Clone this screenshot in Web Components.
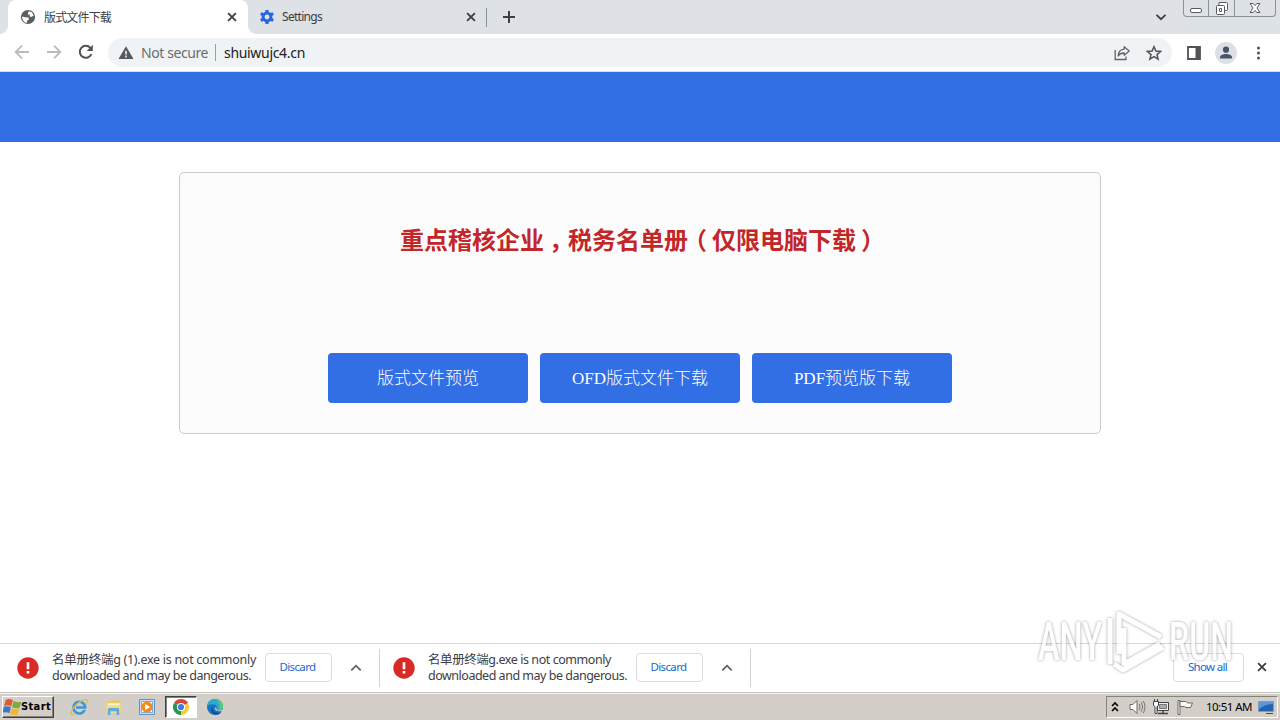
<!DOCTYPE html>
<html lang="zh-CN">
<head>
<meta charset="utf-8">
<title>版式文件下载</title>
<style>
  html, body {
    margin: 0;
    height: 100%;
    overflow: hidden;
  }

  body {
    background: #fff;
    font-family: "Noto Sans", "Noto Sans CJK SC", sans-serif;
  }
</style>
</head>
<body>
<desktop-screen></desktop-screen>

<script>
// @ts-check

/**
 * Registers an element whose shadow root is cloned from a parsed template
 * @param {string} name
 * @param {string} style
 * @param {string} markup
 */
function define(name, style, markup) {
  const tmpl = document.createElement("template");
  tmpl.innerHTML = `<style>* { box-sizing: border-box; } ${style}</style>${markup}`;

  customElements.define(name, class extends HTMLElement {
    constructor() {
      super();
      this.attachShadow({ mode: "open" }).appendChild(tmpl.content.cloneNode(true));
    }
  });
}

// every icon is [viewBox size, markup]
const icons = {
  globe: [16, `<circle cx="8" cy="8" r="7.1" fill="#5a5d61"/>
    <path d="M2.2 7.4 5 8.300 8.400 8.600 9 10.400 7.400 11.600 6.800 14C3.600 13.300 2 10.800 2.200 7.400ZM8.600 2.200 12 3.200 13.700 6.800 11 8 9.600 7.200 9.800 5.600 7.600 5.400Z" fill="#fff"/>`],
  gear: [16, `<circle cx="8" cy="8" r="3.900" fill="none" stroke="#2567dc" stroke-width="3"/>
    <g stroke="#2567dc" stroke-width="3.200"><path d="M8 .9v2.800M8 12.300v2.800M1.850 4.450l2.400 1.400M11.750 10.150l2.400 1.400M1.850 11.550l2.400-1.400M11.750 5.850l2.400-1.400"/></g>`],
  close: [16, `<path d="M3.500 3.500l9 9M12.500 3.500l-9 9" stroke="#3c4043" stroke-width="2.100"/>`],
  plus: [16, `<path d="M8 2v12M2 8h12" stroke="#3c4043" stroke-width="2"/>`],
  down: [16, `<path d="M3.500 5.800 8 10.200l4.500-4.400" fill="none" stroke="#3c4043" stroke-width="1.800"/>`],
  up: [16, `<path d="M3.300 10.400 8 5.700l4.700 4.700" fill="none" stroke="#5f6368" stroke-width="1.800"/>`],
  back: [16, `<path d="M15 8H2M8 1.700 1.700 8 8 14.300" fill="none" stroke="#b9bbbe" stroke-width="1.800"/>`],
  forward: [16, `<path d="M1 8h13M8 1.700 14.300 8 8 14.300" fill="none" stroke="#b9bbbe" stroke-width="1.800"/>`],
  reload: [16, `<path d="M13.400 10A6 6 0 1 1 12.400 3.900" fill="none" stroke="#505357" stroke-width="2"/>
    <path d="M14.800.8v6.100H8.700Z" fill="#505357"/>`],
  warning: [16, `<path d="M8 1.200 15.500 14H.5Z" fill="#55585c"/><path d="M8 5.800v3.600M8 10.600v1.800" stroke="#f1f3f4" stroke-width="1.600"/>`],
  share: [16, `<path d="M1.200 5v9.500H12V11.500" fill="none" stroke="#5f6368" stroke-width="1.300"/>
    <path d="M10.200 1.700 15.200 6 10.200 10.200V8C7.500 7.800 5.600 8.800 4.200 11 4.300 7 6.500 4.400 10.200 4.100Z" fill="none" stroke="#5f6368" stroke-width="1.300" stroke-linejoin="round"/>`],
  star: [16, `<path d="M8 1.700 9.900 6.100 14.600 6.500 11 9.600 12.100 14.200 8 11.700 3.900 14.200 5 9.600 1.400 6.500 6.100 6.100Z" fill="none" stroke="#505357" stroke-width="1.500"/>`],
  panel: [16, `<path d="M2 2h12v12H2Z" fill="none" stroke="#505357" stroke-width="1.800"/><path d="M9.500 2H14v12H9.500Z" fill="#505357"/>`],
  avatar: [22, `<circle cx="11" cy="11" r="11" fill="#dce0e5"/><circle cx="11" cy="7.700" r="3.100" fill="#46536b"/>
    <path d="M5 16.500v-1.200C5 12.800 8.500 12 11 12s6 .8 6 3.300v1.200Z" fill="#46536b"/>`],
  menu: [16, `<g fill="#505357"><circle cx="8.500" cy="2.900" r="1.500"/><circle cx="8.500" cy="8" r="1.500"/><circle cx="8.500" cy="13.100" r="1.500"/></g>`],
  alert: [22, `<circle cx="11" cy="11" r="10.700" fill="#d92b25"/><path d="M11 5.300v6.900M11 14v2.600" stroke="#fff" stroke-width="2.600"/>`],
  minimize: [16, `<rect x="2.500" y="8.500" width="11" height="4" rx="1.500" fill="#fff" stroke="#555a62"/>`],
  restore: [16, `<path d="M5 2.500h7.500q1 0 1 1v6q0 1-1 1h-2v3q0 1-1 1h-6q-1 0-1-1v-7q0-1 1-1H5Z" fill="#fff" stroke="#555a62"/>
    <path d="M5 5.500h4.500q1 0 1 1v4M5.500 8.500h2v3h-2Z" fill="none" stroke="#555a62"/>`],
  winClose: [16, `<path d="M3 3.500h3.200L8 5.600l1.800-2.100H13L9.900 8l3.100 4.500H9.800L8 10.400l-1.800 2.100H3L6.100 8Z" fill="#fff" stroke="#555a62"/>`],
  windows: [18, `<g transform="rotate(7 9 9)"><path d="M2 2.500Q6 .4 9.100 2.400L8.100 8.600Q5 7 1 8.900Z" fill="#e2592b"/>
    <path d="M10 2.900Q13.500 4.500 17.700 2.500L16.600 8.700Q12.500 10.500 9 8.900Z" fill="#7cac3d"/>
    <path d="M.9 9.800Q5 8 8 9.600L7 15.500Q4 14 0 15.900Z" fill="#3b79c4"/>
    <path d="M8.900 10Q12 11.600 16.500 9.700L15.500 15.700Q11 17.500 7.900 15.900Z" fill="#efb929"/></g>`],
  ie: [18, `<path d="M14.700 12A5.900 5.900 0 1 1 15.200 9.600H6" fill="none" stroke="#3898d9" stroke-width="2.500"/>
    <path d="M4.500 16C0 18.500.3 14 3.500 9.700 8 4 15.500-.4 17 2.300c.5 1-.1 2.300-.8 3.400" fill="none" stroke="#e3b84a" stroke-width="1.300"/>`],
  folder: [18, `<path d="M1.500 3h5l1-1.500h9v11h-15Z" fill="#e9c860"/><path d="M2.500 4.500h13v4h-13Z" fill="#fbf4cf"/>
    <path d="M1.500 6.500h15v8h-15Z" fill="#f4dc86"/><path d="M3 17v-6q0-1.500 1.500-1.500h9q1.500 0 1.500 1.500v6h-2.800v-4H5.800v4Z" fill="#63aadb"/>`],
  media: [18, `<path d="M1.500 1.500h15v15h-15Z" fill="#c9e0f4" stroke="#5d93c9"/><path d="M3.500 3.500h11v11h-11Z" fill="#f5f9fc" stroke="#7fabd6"/>
    <circle cx="9" cy="9" r="5.500" fill="#f28a1e"/><path d="M7.200 6v6l5-3Z" fill="#fff"/>`],
  chrome: [18, `<circle cx="9" cy="9" r="8" fill="#fff"/><path d="M9 9 2.070 5A8 8 0 0 1 15.930 5Z" fill="#dc4436"/>
    <path d="M9 9 15.930 5A8 8 0 0 1 9 17Z" fill="#f9cb38"/><path d="M9 9v8A8 8 0 0 1 2.070 5Z" fill="#25984b"/>
    <path d="M9 5h6.930a8 8 0 0 0-2-2.300Z" fill="#dc4436"/><circle cx="9" cy="9" r="4.100" fill="#fff"/><circle cx="9" cy="9" r="3.100" fill="#3f7de0"/>`],
  edge: [18, `<circle cx="9" cy="9" r="8" fill="#1b73c4"/>
    <path d="M1.100 8A8 8 0 0 1 9 1c4.500 0 8 3.500 8 7.600 0 2.600-2 3.900-4.300 3.900-1.500 0-2.500-.5-2.200-1.400.8-1.300.5-4.600-3.500-4.800-2.500 0-4.700.9-5.900 1.700Z" fill="#2aaccb"/>
    <path d="M10 1.100C14 1.500 17 4.900 17 8.600c0 2.600-2 3.900-4.300 3.900 2-3.700 1.300-8-2.700-11.400Z" fill="#5bc873"/>
    <path d="M7 8.600c-1.500 3.700 1.400 7.400 7.800 5.900C13 17 9 17.600 6.500 15.300 4.500 13 4.800 9.800 7 8.600Z" fill="#144f91"/>
    <path d="M9.500 9.300c-1.500 2.200.5 4.700 6.700 3.600l.8-1.400c-3 1.600-6.800 1.300-6.300-.5Z" fill="#d4cec8"/>`],
  chevrons: [16, `<path d="M5 7 8 4l3 3M5 12l3-3 3 3" fill="none" stroke="#000" stroke-width="1.600"/>`],
  speaker: [18, `<path d="M2 6.500h3L9 2.500v13l-4-4H2Z" fill="#fff" stroke="#6b6b6b"/>
    <path d="M11.200 6q1.800 3 0 6M13.200 4.200q3 4.800 0 9.600M15.300 3q3.400 6 0 12" fill="none" stroke="#777"/>`],
  network: [18, `<path d="M5.500 4.500h11v8h-11Z" fill="#eee" stroke="#444"/><path d="M7.500 6.500h7v4h-7Z" fill="#aaa" stroke="#777"/><path d="M6 15.500h10M11 12.500v3" stroke="#444" stroke-width="1.500"/>
    <path d="M1.500 3.500h5v4l-1.500 1v7H3v-7l-1.500-1ZM2.500 1v2.500M5.500 1v2.500" fill="#fff" stroke="#444"/>`],
  flag: [18, `<path d="M2 2.500h2v14H2Z" fill="#fff" stroke="#666"/><path d="M4 3.500h6l1.500 1.500h5l-2 4.500H10L8.500 8.500H4Z" fill="#fff" stroke="#666"/>`],
  desktop: [18, `<path d="M1.500 3.500h15v10h-15Z" fill="#2563b4" stroke="#7c9bbd"/><path d="M2 4h14v2Q8 6 2 11Z" fill="#5b97da"/><path d="M9 15.500h7" stroke="#394c66"/>`]
};

customElements.define("ui-icon", class extends HTMLElement {
  constructor() {
    super();
    this.attachShadow({ mode: "open" });
  }

  connectedCallback() {
    const [box, shape] = icons[this.getAttribute("name")];
    const size = this.getAttribute("size") || box;
    this.shadowRoot.innerHTML = `
      <style>
        :host { display: block; flex: none; width: ${size}px; height: ${size}px; }
        svg { display: block; }
      </style>
      <svg width="${size}" height="${size}" viewBox="0 0 ${box} ${box}">${shape}</svg>`;
  }
});

define("browser-tab", `
  :host {
    display: flex;
    align-items: center;
    width: 238px;
    height: 34px;
    padding: 0 8px 0 11px;
    font-size: 12px;
    color: #3c4043;
  }
  :host([active]) {
    position: relative;
    width: 240px;
    padding-right: 9px;
    padding-left: 12px;
    background: #fff;
    border-radius: 8px 8px 0 0;
  }
  /* the outward curves at the foot of the active tab */
  :host([active])::before,
  :host([active])::after {
    content: "";
    position: absolute;
    bottom: 0;
    width: 8px;
    height: 8px;
  }
  :host([active])::before { left: -8px; background: radial-gradient(circle at 0 0, transparent 7.5px, #fff 8px); }
  :host([active])::after { right: -8px; background: radial-gradient(circle at 100% 0, transparent 7.5px, #fff 8px); }
  .title { flex: 1; padding-left: 7px; line-height: 16px; }
  :host([active]) .title { padding: 1px 0 0 8px; }
`, `<slot name="icon"></slot><div class="title"><slot></slot></div><ui-icon name="close" size="14"></ui-icon>`);

define("window-buttons", `
  :host {
    display: flex;
    width: 93px;
    height: 17px;
    margin-right: 4px;
    border: 1px solid #8b919a;
    border-top: 0;
    border-radius: 0 0 4px 4px;
  }
  div { display: flex; justify-content: center; width: 24px; }
  div + div { width: 26px; border-left: 1px solid #8b919a; }
  div + .close { flex: 1; }
`, `<div><ui-icon name="minimize"></ui-icon></div><div><ui-icon name="restore"></ui-icon></div>
  <div class="close"><ui-icon name="winClose"></ui-icon></div>`);

define("tab-strip", `
  :host {
    display: flex;
    height: 34px;
    padding-left: 8px;
    background: #dee1e6;
  }
  .line { width: 1px; height: 19px; margin: 8px 14px 0 0; background: #8b8f96; }
  .plus { margin-top: 9px; }
  .down { margin: 9px 14px 0 auto; }
`, `
  <browser-tab active><ui-icon slot="icon" name="globe"></ui-icon><fit-label width="67">版式文件下载</fit-label></browser-tab>
  <browser-tab><ui-icon slot="icon" name="gear"></ui-icon><fit-label width="40">Settings</fit-label></browser-tab>
  <div class="line"></div>
  <ui-icon class="plus" name="plus"></ui-icon>
  <ui-icon class="down" name="down"></ui-icon>
  <window-buttons></window-buttons>
`);

define("address-bar", `
  :host {
    display: flex;
    align-items: center;
    height: 38px;
    padding: 0 14px;
    border-bottom: 1px solid #dcdfe3;
    background: #fff;
  }
  .nav { display: flex; gap: 16px; margin-top: -1px; }
  .box {
    flex: 1;
    display: flex;
    align-items: center;
    height: 29px;
    margin: 0 14px;
    padding: 0 10px;
    border-radius: 15px;
    background: #f0f3f5;
    font-size: 14px;
    line-height: 20px;
    color: #202124;
  }
  .secure { margin-left: 7px; color: #686c71; }
  .line { width: 1px; height: 17px; margin: 0 8px 0 7px; background: #9b9ea2; }
  .right { display: flex; gap: 16px; margin-left: auto; }
  .actions { display: flex; align-items: center; gap: 13px; }
`, `
  <div class="nav"><ui-icon name="back"></ui-icon><ui-icon name="forward"></ui-icon><ui-icon name="reload"></ui-icon></div>
  <div class="box">
    <ui-icon name="warning"></ui-icon>
    <fit-label class="secure" width="67">Not secure</fit-label>
    <div class="line"></div>
    <fit-label width="81">shuiwujc4.cn</fit-label>
    <div class="right"><ui-icon name="share"></ui-icon><ui-icon name="star"></ui-icon></div>
  </div>
  <div class="actions"><ui-icon name="panel"></ui-icon><ui-icon name="avatar"></ui-icon><ui-icon name="menu"></ui-icon></div>
`);

define("file-button", `
  :host {
    display: flex;
    align-items: center;
    justify-content: center;
    width: 200px;
    height: 50px;
    padding-top: 2px;
    border-radius: 4px;
    background: #326ee4;
    color: #fff;
    font: 300 17px/24px "Liberation Serif", "Noto Sans CJK SC", serif;
  }
`, `<slot></slot>`);

define("download-page", `
  :host { display: block; flex: 1; background: #fff; }
  header { height: 70px; background: #326ee4; }
  .card {
    display: flex;
    flex-direction: column;
    justify-content: space-between;
    width: 922px;
    height: 262px;
    margin: 30px auto 0;
    padding: 48px 0 30px;
    border: 1px solid #c9cbcd;
    border-radius: 5px;
    background: #fcfcfc;
  }
  h1 {
    margin: 0;
    font: 700 24px/36px "Noto Sans CJK SC", sans-serif;
    text-align: center;
    white-space: nowrap;
    color: #c22628;
  }
  /* half-width punctuation, set near the middle of a full-width cell */
  span { font-feature-settings: "halt" 1; padding: 0 7px 0 5px; }
  .open { padding: 0 5px 0 7px; }
  .row { display: flex; justify-content: center; gap: 12px; }
`, `
  <header></header>
  <div class="card">
    <h1>重点稽核企业<span>，</span>税务名单册<span class="open">（</span>仅限电脑下载<span>）</span></h1>
    <div class="row">
      <file-button>版式文件预览</file-button>
      <file-button>OFD版式文件下载</file-button>
      <file-button>PDF预览版下载</file-button>
    </div>
  </div>
`);

define("shelf-button", `
  :host {
    display: flex;
    align-items: center;
    justify-content: center;
    width: 67px;
    height: 29px;
    padding: 0 2px 2px 0;
    border: 1px solid #dadce0;
    border-radius: 4px;
    font-size: 11.500px;
    color: #1b68c9;
  }
`, `<slot></slot>`);

define("download-item", `
  :host {
    display: flex;
    align-items: center;
    height: 38px;
    padding: 0 15px 0 13px;
    border-right: 1px solid #d0d2d5;
  }
  .text {
    margin-left: 13px;
    font-size: 12.500px;
    line-height: 16px;
    color: #3c4043;
  }
  .text ::slotted(*) { display: block; }
  shelf-button { margin: -1px 16px 0 auto; }
`, `
  <ui-icon name="alert"></ui-icon>
  <div class="text"><slot></slot></div>
  <shelf-button><fit-label width="36">Discard</fit-label></shelf-button>
  <ui-icon name="up"></ui-icon>
`);

define("download-shelf", `
  :host {
    display: flex;
    align-items: center;
    height: 50px;
    border-top: 1px solid #d5d7da;
    padding: 0 11px 1px 4px;
    background: #fff;
  }
  .first { width: 376px; }
  .second { width: 371px; padding-left: 13px; }
  .all { width: 71px; margin: -1px 11px 0 auto; }
  .close { margin-top: -2px; }
`, `
  <download-item class="first">
    <fit-label width="204">名单册终端g (1).exe is not commonly</fit-label>
    <fit-label width="199">downloaded and may be dangerous.</fit-label>
  </download-item>
  <download-item class="second">
    <fit-label width="183">名单册终端g.exe is not commonly</fit-label>
    <fit-label width="199">downloaded and may be dangerous.</fit-label>
  </download-item>
  <shelf-button class="all"><fit-label width="39">Show all</fit-label></shelf-button>
  <ui-icon class="close" name="close" size="14"></ui-icon>
`);

define("task-bar", `
  :host {
    display: flex;
    height: 27px;
    padding: 2px 2px 2px;
    border-top: 1px solid #f4f2ef;
    box-shadow: 0 -1px #c9c6c1;
    background: #d4cec8;
    color: #000;
  }
  .start {
    display: flex;
    align-items: center;
    width: 52px;
    height: 22px;
    border: 1px solid;
    border-color: #fff #404040 #404040 #fff;
    box-shadow: inset -1px -1px #85817c;
    font: 700 11px/16px "DejaVu Sans Condensed", sans-serif;
  }
  .apps { display: flex; margin-left: 9px; gap: 2px; }
  .app {
    display: flex;
    align-items: center;
    justify-content: center;
    width: 32px;
    height: 22px;
  }
  .app.on {
    border: 1px solid;
    border-color: #404040 #fff #fff #404040;
    box-shadow: inset 1px 1px #85817c;
    background: #fff;
  }
  .tray {
    display: flex;
    align-items: center;
    width: 172px;
    height: 22px;
    margin-left: auto;
    border: 1px solid;
    border-color: #85817c #fff #fff #85817c;
    font-size: 11.500px;
  }
  .tray ui-icon + ui-icon { margin-left: 6px; }
  .tray .speaker { margin-left: 5px !important; }
  .clock { margin: -1px 5px 0 12px; }
`, `
  <div class="start"><ui-icon name="windows"></ui-icon><fit-label width="30">Start</fit-label></div>
  <div class="apps">
    <div class="app"><ui-icon name="ie"></ui-icon></div>
    <div class="app"><ui-icon name="folder" size="17"></ui-icon></div>
    <div class="app"><ui-icon name="media"></ui-icon></div>
    <div class="app on"><ui-icon name="chrome"></ui-icon></div>
    <div class="app"><ui-icon name="edge"></ui-icon></div>
  </div>
  <div class="tray">
    <ui-icon name="chevrons"></ui-icon>
    <ui-icon class="speaker" name="speaker"></ui-icon>
    <ui-icon name="network"></ui-icon>
    <ui-icon name="flag"></ui-icon>
    <fit-label class="clock" width="46">10:51 AM</fit-label>
    <ui-icon name="desktop"></ui-icon>
  </div>
`);

define("any-run-mark", `
  :host {
    position: absolute;
    left: 1030px;
    top: 604px;
    width: 250px;
    height: 76px;
    pointer-events: none;
  }
  svg { display: block; filter: drop-shadow(0 0 1.500px rgba(0, 0, 0, .5)); opacity: .75; }
  text { font: 500 53px Roboto, sans-serif; fill: #fff; }
`, `
  <svg width="250" height="76" viewBox="0 0 250 76">
    <text x="8" y="56" textLength="64" lengthAdjust="spacingAndGlyphs">ANY</text>
    <g fill="none" stroke="#fff" stroke-width="5" stroke-linejoin="round">
      <path d="M80 14v46M89 50V10l42 23M94 24v36l36-20M84 60l9 6 40-23"/>
    </g>
    <text x="139" y="56" textLength="64" lengthAdjust="spacingAndGlyphs">RUN</text>
  </svg>
`);

define("desktop-screen", `
  :host {
    position: relative;
    display: flex;
    flex-direction: column;
    width: 1280px;
    height: 720px;
    overflow: hidden;
  }
`, `
  <tab-strip></tab-strip>
  <address-bar></address-bar>
  <download-page></download-page>
  <download-shelf></download-shelf>
  <task-bar></task-bar>
  <any-run-mark></any-run-mark>
`);

/**
 * One line of text, tracked so that it fills the given width.
 * Defined last: it measures itself with the fonts of its ancestors.
 */
customElements.define("fit-label", class extends HTMLElement {
  constructor() {
    super();
    this.attachShadow({ mode: "open" }).innerHTML = `
      <style>:host { display: block; flex: none; white-space: nowrap; } span { display: inline-block; }</style>
      <span><slot></slot></span>`;
  }

  connectedCallback() {
    const span = this.shadowRoot.querySelector("span");
    const spare = Number(this.getAttribute("width")) - span.getBoundingClientRect().width;
    span.style.letterSpacing = `${spare / this.textContent.length}px`;
  }
});
</script>
</body>
</html>
